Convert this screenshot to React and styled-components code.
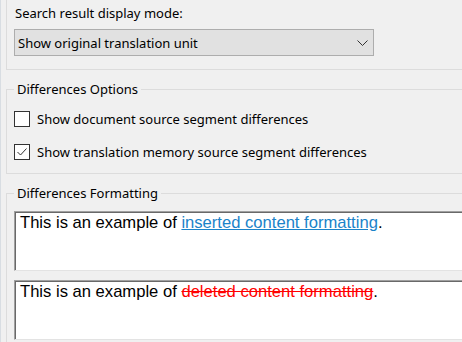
import React from "react";
import styled, { createGlobalStyle } from "styled-components";

const Global = createGlobalStyle`
  html, body { margin: 0; padding: 0; background: #f0f0f0; }
  body { font-family: "Noto Sans", "Segoe UI", sans-serif; font-size: 13px; color: #000; }
`;

const Page = styled.div`
  width: 462px;
  height: 342px;
  overflow: hidden;
  box-sizing: border-box;
  border-left: 1px solid #d8dde2;
  padding-left: 5px;
`;

const TopGroup = styled.div`
  width: 600px;
  border-left: 1px solid #dcdcdc;
  border-bottom: 1px solid #dcdcdc;
  padding: 4px 0 13px 7px;
`;

const Label = styled.div`
  line-height: 18px;
  padding-left: 1px;
`;

const Combo = styled.div`
  margin-top: 7px;
  width: 360px;
  height: 27px;
  box-sizing: border-box;
  background: #e1e1e1;
  border: 1px solid #adadad;
  display: flex;
  align-items: center;
  justify-content: space-between;
  padding: 0 5px 0 3px;
`;

const Group = styled.fieldset`
  margin: ${(p) => p.$top}px 0 0 0;
  width: 600px;
  border: 1px solid #dcdcdc;
  border-right: none;
  padding: ${(p) => p.$pt}px 0 ${(p) => p.$pb}px 7px;
  min-width: 0;
`;

const Legend = styled.legend`
  line-height: 18px;
  padding: 0 3px;
  margin-left: 0;
`;

const CheckRow = styled.label`
  display: flex;
  align-items: center;
  height: 16px;
  gap: 7px;
  & + & { margin-top: 17px; }
`;

const Box = styled.span`
  width: 16px;
  height: 16px;
  box-sizing: border-box;
  border: 1px solid #333;
  background: #fff;
  display: flex;
  align-items: center;
  justify-content: center;
  flex: none;
`;

const TextBox = styled.div`
  height: 60px;
  box-sizing: border-box;
  background: #fff;
  border-top: 1px solid #a0a0a0;
  border-left: 1px solid #a0a0a0;
  border-bottom: 1px solid #e3e3e3;
  box-shadow: inset 1px 1px 0 #696969;
  padding: 1px 0 0 5px;
  font-family: "Liberation Sans", Arial, sans-serif;
  font-size: 16.6px;
  & + & { margin-top: 9px; }
`;

const Inserted = styled.span`
  color: #1a83c9;
  text-decoration: underline;
`;

const Deleted = styled.span`
  color: #ff0000;
  text-decoration: line-through;
`;

const Chevron = () => (
  <svg width="11" height="6" viewBox="0 0 11 6">
    <path d="M0.5 0.5 L5.5 5.5 L10.5 0.5" fill="none" stroke="#333" strokeWidth="1" />
  </svg>
);

const Check = () => (
  <svg width="10" height="8" viewBox="0 0 10 8">
    <path d="M0.5 4 L3.5 7 L9.5 0.5" fill="none" stroke="#333" strokeWidth="1" />
  </svg>
);

export default function App() {
  return (
    <>
      <Global />
      <Page>
        <TopGroup>
          <Label>Search result display mode:</Label>
          <Combo>
            <span>Show original translation unit</span>
            <Chevron />
          </Combo>
        </TopGroup>
        <Group $top={10} $pt={13} $pb={13}>
          <Legend>Differences Options</Legend>
          <CheckRow>
            <Box />
            <span>Show document source segment differences</span>
          </CheckRow>
          <CheckRow>
            <Box>
              <Check />
            </Box>
            <span>Show translation memory source segment differences</span>
          </CheckRow>
        </Group>
        <Group $top={10} $pt={9} $pb={10}>
          <Legend>Differences Formatting</Legend>
          <TextBox>
            This is an example of <Inserted>inserted content formatting</Inserted>.
          </TextBox>
          <TextBox>
            This is an example of <Deleted>deleted content formatting</Deleted>.
          </TextBox>
        </Group>
      </Page>
    </>
  );
}
